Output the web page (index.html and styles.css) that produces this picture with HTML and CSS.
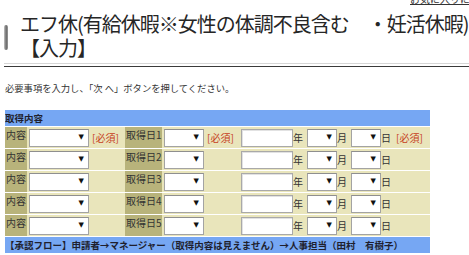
FILE: index.html
```html
<!DOCTYPE html>
<html lang="ja">
<head>
<meta charset="utf-8">
<title>エフ休【入力】</title>
<link rel="stylesheet" href="styles.css">
</head>
<body>
<div class="toplink"><a href="#">お気に入りに追加</a></div>
<div class="title">
  <span class="bar"></span>
  <h1>エフ休(有給休暇※女性の体調不良含む　・妊活休暇)【入力】</h1>
</div>
<div class="rule"></div>
<p class="lead">必要事項を入力し、「次 へ」ボタンを押してください。</p>
<table class="form">
  <colgroup>
    <col class="c1"><col class="c2"><col class="c3"><col class="c4"><col class="c5"><col class="c6"><col class="c7">
  </colgroup>
  <thead>
    <tr><th colspan="7" class="bluebar head">取得内容</th></tr>
  </thead>
  <tbody>
    <tr>
      <th class="lbl">内容</th>
      <td class="sc"><span class="sel w60"><select></select><i>▼</i></span></td>
      <td class="req">[必須]</td>
      <th class="lbl">取得日1</th>
      <td class="sc"><span class="sel w40"><select></select><i>▼</i></span></td>
      <td class="req">[必須]</td>
      <td class="date"><div class="dt"><input class="yr" type="text"><span class="u">年</span><span class="sel w30"><select></select><i>▼</i></span><span class="u">月</span><span class="sel w30"><select></select><i>▼</i></span><span class="u">日</span><span class="reqt">[必須]</span></div></td>
    </tr>
    <tr>
      <th class="lbl">内容</th>
      <td class="sc"><span class="sel w60"><select></select><i>▼</i></span></td>
      <td class="req"></td>
      <th class="lbl">取得日2</th>
      <td class="sc"><span class="sel w40"><select></select><i>▼</i></span></td>
      <td class="req"></td>
      <td class="date"><div class="dt"><input class="yr" type="text"><span class="u">年</span><span class="sel w30"><select></select><i>▼</i></span><span class="u">月</span><span class="sel w30"><select></select><i>▼</i></span><span class="u">日</span></div></td>
    </tr>
    <tr>
      <th class="lbl">内容</th>
      <td class="sc"><span class="sel w60"><select></select><i>▼</i></span></td>
      <td class="req"></td>
      <th class="lbl">取得日3</th>
      <td class="sc"><span class="sel w40"><select></select><i>▼</i></span></td>
      <td class="req"></td>
      <td class="date"><div class="dt"><input class="yr" type="text"><span class="u">年</span><span class="sel w30"><select></select><i>▼</i></span><span class="u">月</span><span class="sel w30"><select></select><i>▼</i></span><span class="u">日</span></div></td>
    </tr>
    <tr>
      <th class="lbl">内容</th>
      <td class="sc"><span class="sel w60"><select></select><i>▼</i></span></td>
      <td class="req"></td>
      <th class="lbl">取得日4</th>
      <td class="sc"><span class="sel w40"><select></select><i>▼</i></span></td>
      <td class="req"></td>
      <td class="date"><div class="dt"><input class="yr" type="text"><span class="u">年</span><span class="sel w30"><select></select><i>▼</i></span><span class="u">月</span><span class="sel w30"><select></select><i>▼</i></span><span class="u">日</span></div></td>
    </tr>
    <tr>
      <th class="lbl">内容</th>
      <td class="sc"><span class="sel w60"><select></select><i>▼</i></span></td>
      <td class="req"></td>
      <th class="lbl">取得日5</th>
      <td class="sc"><span class="sel w40"><select></select><i>▼</i></span></td>
      <td class="req"></td>
      <td class="date"><div class="dt"><input class="yr" type="text"><span class="u">年</span><span class="sel w30"><select></select><i>▼</i></span><span class="u">月</span><span class="sel w30"><select></select><i>▼</i></span><span class="u">日</span></div></td>
    </tr>
  </tbody>
  <tfoot>
    <tr><td colspan="7" class="bluebar foot">【承認フロー】申請者→マネージャー（取得内容は見えません）→人事担当（田村　有樹子）</td></tr>
  </tfoot>
</table>
</body>
</html>
```

FILE: styles.css
```css
html {
  overflow: hidden;
}
body {
  margin: 0;
  background: #ffffff;
  color: #333333;
  font-family: "Noto Sans CJK JP", "Noto Sans", sans-serif;
}
.toplink {
  margin-top: -6px;
  height: 12px;
  padding-left: 410px;
  white-space: nowrap;
  overflow: hidden;
  font-size: 10px;
  line-height: 10px;
}
.toplink a {
  color: #333333;
  text-decoration: underline;
}
.title {
  display: flex;
  align-items: flex-start;
  margin-top: 6px;
}
.bar {
  flex: none;
  width: 4px;
  height: 25px;
  margin: 13px 0 0 4px;
  border-radius: 2px;
  background: linear-gradient(to right, #c4c4c4, #6a6a6a 55%, #9a9a9a);
}
.title h1 {
  margin: 0 0 0 12px;
  font-size: 20px;
  font-weight: normal;
  letter-spacing: -1px;
  line-height: 24px;
  color: #262626;
}
.rule {
  margin: 3px 0 0 4px;
  height: 2px;
  border-top: 1px solid #d6d6d6;
  border-bottom: 1px solid #3a3a3a;
}
.lead {
  margin: 15px 0 0 5px;
  font-size: 9.3px;
  line-height: 12px;
  color: #333333;
  white-space: nowrap;
}
.form {
  margin: 15px 0 0 5px;
  width: 425px;
  table-layout: fixed;
  border-collapse: separate;
  border-spacing: 0 1px;
  font-size: 10px;
}
.c1 { width: 22px; }
.c2 { width: 63px; }
.c3 { width: 35px; }
.c4 { width: 37px; }
.c5 { width: 43px; }
.c6 { width: 35px; }
.c7 { width: 190px; }
.form th,
.form td {
  padding: 0;
  white-space: nowrap;
  overflow: hidden;
}
.bluebar {
  background: #76a7f3;
  height: 16px;
  line-height: 16px;
  font-size: 9.5px;
  text-align: left;
  color: #1f1f2e;
  padding-left: 1px;
}
.head {
  font-weight: bold;
}
.foot {
  font-weight: bold;
}
.form tbody td,
.form tbody th {
  height: 21px;
  background: #e9e5bb;
}
.form tbody th.lbl {
  background: #b8b37b;
  font-weight: normal;
  text-align: left;
  vertical-align: top;
  line-height: 15px;
  padding-left: 1px;
  color: #333333;
}
.sc {
  padding-left: 2px !important;
  vertical-align: middle;
}
.req {
  padding-left: 2px !important;
  color: #c6401c;
  vertical-align: middle;
}
.sel {
  display: inline-flex;
  align-items: center;
  box-sizing: border-box;
  height: 18px;
  border: 1px solid #a3a3a3;
  border-top-color: #8f8f8f;
  background: #ffffff;
  vertical-align: middle;
}
.sel select {
  flex: 1;
  min-width: 0;
  height: 100%;
  border: 0;
  padding: 0;
  margin: 0;
  background: transparent;
  -webkit-appearance: none;
  appearance: none;
}
.sel i {
  font-style: normal;
  font-family: "DejaVu Sans", sans-serif;
  font-size: 7px;
  line-height: 7px;
  color: #111111;
  margin-right: 4px;
}
.w60 { width: 60px; }
.w40 { width: 40px; }
.w30 { width: 30px; }
.date {
  vertical-align: middle;
  padding-left: 1px !important;
}
.dt {
  display: flex;
  align-items: center;
}
.yr {
  box-sizing: border-box;
  width: 52px;
  height: 18px;
  margin: 0;
  padding: 0;
  border: 1px solid #a9a9a9;
  box-shadow: inset 1px 1px 0 #e2e2e2;
  background: #ffffff;
}
.u {
  display: inline-block;
  width: 14px;
  color: #333333;
}
.dt .u:nth-of-type(2) {
  width: 15px;
}
.reqt {
  margin-left: 1px;
  color: #c6401c;
}
```
